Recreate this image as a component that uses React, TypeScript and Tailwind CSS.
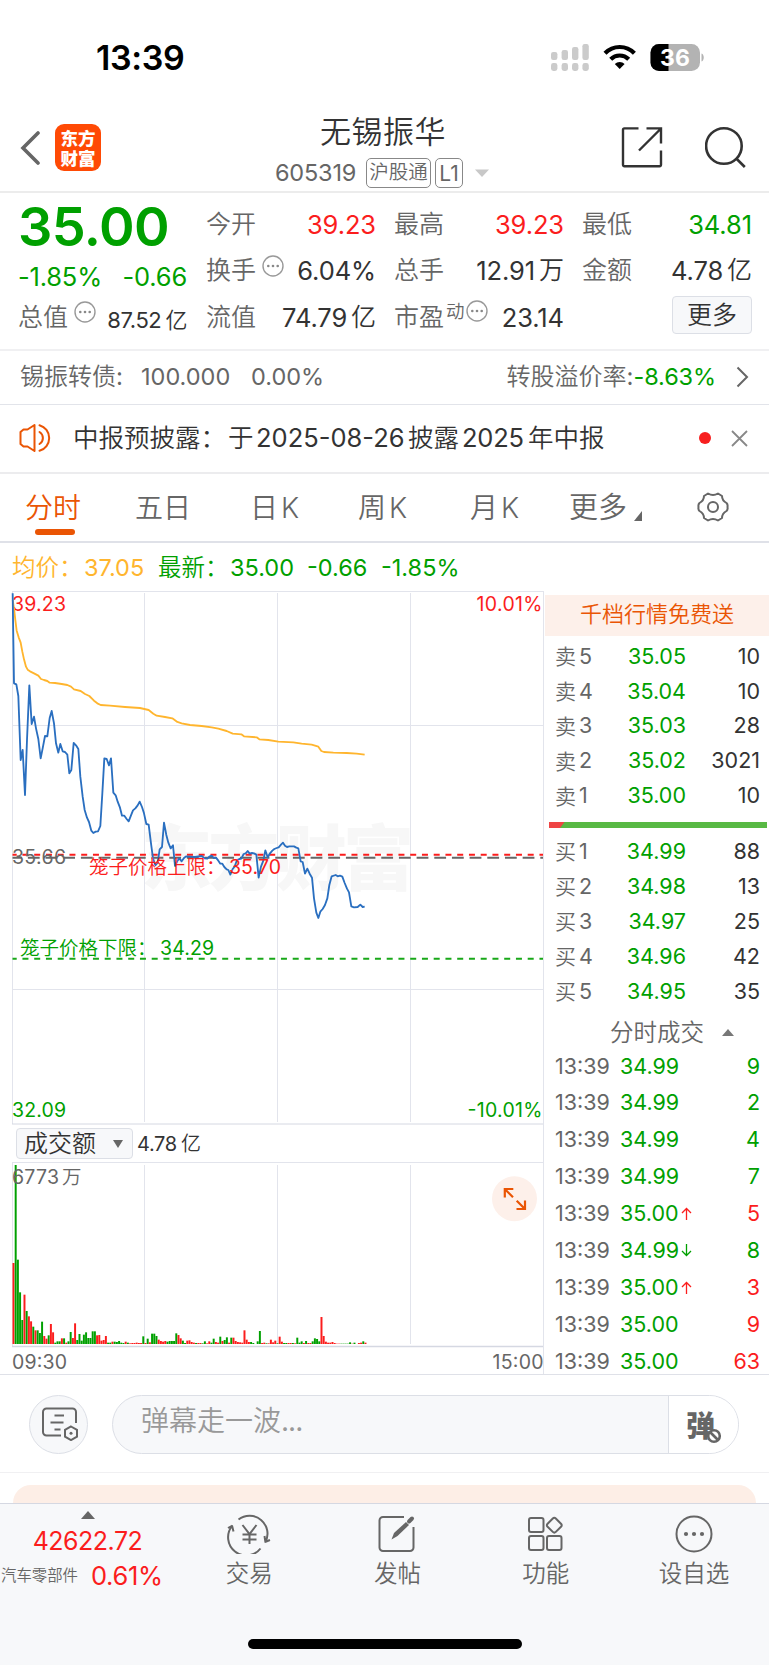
import type { ReactNode } from 'react';

const AVERAGE =
  '38,60 42,85 46,120 50,152 56,172 62,188 67,215 72,238 78,260 83,269 90,274 102,280 115,287 123,297 132,300 142,303 149,308 165,309 185,312 202,315 213,320 222,328 242,333 255,342 268,348 282,362 292,370 302,375 330,377 375,381 420,384 446,390 460,401 470,407 495,411 517,415 532,426 545,430 570,435 605,438 635,442 655,446 680,453 698,461 724,463 732,469 770,472 778,478 805,480 835,485 880,487 905,491 935,494 955,500 964,513 972,516 1000,518 1040,519 1070,521 1094,524';

const PRICE =
  '38,40 40,180 42,310 49,313 55,348 62,540 68,510 75,645 81,480 88,316 95,432 102,410 108,445 115,477 122,535 128,505 135,468 142,469 149,414 155,393 162,430 168,490 175,518 181,492 188,514 195,516 202,524 208,580 214,570 221,489 228,496 235,507 241,590 248,650 254,690 261,713 267,726 274,752 280,759 287,755 294,754 301,738 307,640 313,535 320,537 327,556 333,535 340,638 347,646 353,665 360,683 366,707 373,707 380,717 386,724 393,706 399,691 406,685 413,676 419,665 426,681 432,700 439,732 446,734 453,790 459,835 466,856 473,848 479,808 486,801 492,728 499,765 505,788 512,805 519,796 525,858 532,843 538,835 545,844 552,834 558,829 570,830 585,831 605,828 614,835 622,836 628,830 635,827 641,834 648,833 655,842 661,851 667,851 673,861 680,868 685,870 691,884 698,867 704,860 711,840 718,837 724,836 731,822 737,820 743,813 749,821 756,819 762,820 769,824 776,893 783,860 790,842 796,811 803,832 810,820 817,812 823,807 830,804 836,802 843,794 849,788 855,797 861,801 868,799 882,799 889,803 895,805 902,844 908,846 915,881 922,866 929,881 936,893 942,955 949,998 955,1014 961,995 968,987 975,975 982,955 988,915 995,889 1007,885 1013,889 1020,887 1027,890 1034,909 1041,926 1047,937 1054,979 1062,982 1073,981 1081,974 1088,981 1094,980';

const VOLUME =
  'r243 g537 g253 g155 g72 r148 g99 r83 r68 g52 r41 g41 g33 g67 r24 r16 g26 r60 r35 g4 g8 g8 r17 g17 r4 g8 g36 r18 r62 g12 g30 g10 g28 g35 g18 g18 g38 g38 r26 r27 r10 r12 r24 g4 g4 r7 g7 g6 g9 g4 g3 r7 g4 r2 r3 r3 r4 r3 r3 g23 r3 g16 r5 g31 g31 g24 r13 r9 r7 r9 g7 g9 g9 g9 g32 r27 r17 g10 g3 r10 r11 r6 r4 g3 r3 r3 g2 g8 r2 r8 g4 g16 r6 r4 g22 r9 g12 g20 r4 g19 r19 r9 r6 r5 r4 r41 r13 r6 g6 g3 r0 g8 g39 r3 r4 g2 r2 r13 r5 r10 g2 r22 r7 g3 g3 r3 r3 g3 r2 g19 g4 g8 r3 g9 r3 r3 g8 g17 g15 g8 r81 r24 r7 r4 r4 r6 r3 r1 r1 g1 g1 g1 g1 g5 r1 g4 r0 r3 r4 g8 r4'
    .split(' ')
    .map((s) => ({ up: s[0] === 'r', h: Number(s.slice(1)) }));

const SELL = [
  ['5', '35.05', '10'],
  ['4', '35.04', '10'],
  ['3', '35.03', '28'],
  ['2', '35.02', '3021'],
  ['1', '35.00', '10'],
];
const BUY = [
  ['1', '34.99', '88'],
  ['2', '34.98', '13'],
  ['3', '34.97', '25'],
  ['4', '34.96', '42'],
  ['5', '34.95', '35'],
];
const TRADES: [string, string, string, boolean][] = [
  ['34.99', '', '9', false],
  ['34.99', '', '2', false],
  ['34.99', '', '4', false],
  ['34.99', '', '7', false],
  ['35.00', 'up', '5', true],
  ['34.99', 'down', '8', false],
  ['35.00', 'up', '3', true],
  ['35.00', '', '9', true],
  ['35.00', '', '63', true],
];

function StatusBar() {
  return (
    <div className="flex h-[115px] items-center justify-between pr-[64px] pl-[96px]">
      <span className="text-[34px] font-semibold tracking-[-0.4px] text-black">13:39</span>
      <svg width="154" height="30" viewBox="0 0 154 30">
        <g fill="#cbcbcb">
          <rect x="0" y="9" width="6.4" height="8" rx="2.2" />
          <rect x="10.6" y="7" width="6.4" height="10" rx="2.2" />
          <rect x="21" y="4" width="6.4" height="13" rx="2.2" />
          <rect x="31.4" y="1" width="6.4" height="16" rx="2.2" />
          <rect x="0" y="20" width="6.4" height="8" rx="2.4" />
          <rect x="10.6" y="20" width="6.4" height="8" rx="2.4" />
          <rect x="21" y="20" width="6.4" height="8" rx="2.4" />
          <rect x="31.4" y="20" width="6.4" height="8" rx="2.4" />
        </g>
        <g fill="none" stroke="#000" strokeWidth="4.2">
          <path d="M54 10.200a20.5 20.5 0 0 1 29.4 0" />
          <path d="M59.7 16.200a12.8 12.8 0 0 1 18 0" />
        </g>
        <path d="M63.8 21a7 7 0 0 1 9.8 0l-4.900 5z" fill="#000" />
        <clipPath id="battery">
          <rect x="99.500" y="1" width="49.5" height="27" rx="8.5" />
        </clipPath>
        <g clipPath="url(#battery)">
          <rect x="99" y="1" width="51" height="27" fill="#b3b3b3" />
          <rect x="99" y="1" width="18.500" height="27" fill="#000" />
        </g>
        <path d="M150.500 10.5c3 .8 3 7.2 0 8z" fill="#b3b3b3" />
        <text x="124" y="22.600" textAnchor="middle" fontSize="23" fontWeight="700" fill="#fff">36</text>
      </svg>
    </div>
  );
}

function Header() {
  return (
    <div className="flex h-[78px] items-start border-b-2 border-[#ececec] pr-[22px] pl-[20px]">
      <div className="flex w-[255px] items-center gap-[15px] pt-[9px]">
        <svg width="20" height="34" viewBox="0 0 20 34" fill="none" stroke="#666" strokeWidth="3.6" strokeLinecap="round">
          <path d="M18 2 3 17l15 15" />
        </svg>
        <div className="grid h-[47px] w-[46px] content-center rounded-[9px] bg-[#ff4a05] text-center font-['Noto_Sans_CJK_SC',sans-serif] text-[17.5px] leading-[19.5px] font-black text-white">
          <span>东方</span>
          <span>财富</span>
        </div>
      </div>
      <div className="flex w-[216px] flex-col">
        <div className="self-center text-[31px] leading-[34px] tracking-[0.5px] text-[#333]">无锡振华</div>
        <div className="mt-[9px] flex h-[30px] items-center gap-[4px] text-[#666]">
          <span className="mr-[2px] w-[85px] text-[23.5px] tracking-[-0.200px]">605319</span>
          <span className="flex h-[30px] w-[65px] items-center justify-center rounded-[5px] border border-[#888] text-[19.5px] leading-none">沪股通</span>
          <span className="flex h-[30px] w-[28px] items-center justify-center rounded-[5px] border border-[#888] text-[21px] leading-none">L1</span>
          <svg className="ml-[8px] shrink-0" width="14" height="8" viewBox="0 0 14 8">
            <path d="M0 .5h14L7 8z" fill="#c8c8c8" />
          </svg>
        </div>
      </div>
      <div className="ml-auto flex gap-[42px] pt-[11px]">
        <svg width="42" height="42" viewBox="0 0 42 42" fill="none" stroke="#333" strokeWidth="2.4">
          <path d="M17.5 2.4H3.4a1.4 1.4 0 0 0-1.4 1.4v35a1.4 1.4 0 0 0 1.4 1.4h35.200a1.4 1.4 0 0 0 1.400-1.400V24.500M25.500 2.400H40V17.500M39.500 3 18 24.500" />
        </svg>
        <svg width="42" height="42" viewBox="0 0 42 42" fill="none" stroke="#333" strokeWidth="2.6">
          <circle cx="18.900" cy="20" r="17.800" />
          <path d="m30.800 32 9 9" />
        </svg>
      </div>
    </div>
  );
}

function Dots() {
  return (
    <svg className="shrink-0" width="22" height="22" viewBox="0 0 22 22">
      <circle cx="11" cy="11" r="10" fill="none" stroke="#999" strokeWidth="1.400" />
      <g fill="#888">
        <circle cx="6.300" cy="11" r="1.300" />
        <circle cx="11" cy="11" r="1.300" />
        <circle cx="15.700" cy="11" r="1.300" />
      </g>
    </svg>
  );
}

function Label({ children }: { children: ReactNode }) {
  return <span className="text-[25px] leading-none text-[#666]">{children}</span>;
}

function Stat({ label, extra, value, unit, tone }: { label: string; extra?: ReactNode; value: string; unit?: string; tone: string }) {
  return (
    <div className="flex h-[46.500px] items-center">
      <Label>{label}</Label>
      {extra}
      <span className={`ml-auto flex items-center gap-[4px] text-[25.500px] leading-none tracking-[-0.100px] ${tone}`}>
        {value}
        {unit && <span className="text-[25px]">{unit}</span>}
      </span>
    </div>
  );
}

function Quote() {
  const dark = 'text-[#333]';
  return (
    <div className="grid h-[158px] grid-cols-[170px_170px_170px_170px] gap-x-[18px] border-b-2 border-[#f0f0f2] pt-[8px] pl-[18px]">
      <div className="flex flex-col pr-[1px] leading-none text-[#00a000]">
        <div className="mt-[-3px] text-[54px] leading-[57px] font-semibold tracking-[-0.600px]">35.00</div>
        <div className="mt-[8px] flex justify-between text-[25.500px] leading-[28px] tracking-[-0.200px]">
          <span>-1.85%</span>
          <span>-0.66</span>
        </div>
        <div className="mt-[3px] flex h-[46.500px] items-center">
          <Label>总值</Label>
          <span className="mb-[11px] ml-[6px]"><Dots /></span>
          <span className="mt-[5px] ml-auto flex items-center gap-[4px] text-[22px] leading-none tracking-[-0.400px] text-[#333]">
            87.52<span>亿</span>
          </span>
        </div>
      </div>
      <div>
        <Stat label="今开" value="39.23" tone="text-[#fb1d1d]" />
        <Stat label="换手" extra={<span className="mb-[10px] ml-[6px]"><Dots /></span>} value="6.04%" tone={dark} />
        <Stat label="流值" value="74.79" unit="亿" tone={dark} />
      </div>
      <div>
        <Stat label="最高" value="39.23" tone="text-[#fb1d1d]" />
        <Stat label="总手" value="12.91" unit="万" tone={dark} />
        <Stat
          label="市盈"
          extra={
            <span className="mb-[13px] ml-[2px] flex items-center gap-[1px] text-[18.500px] leading-none text-[#666]">
              动<Dots />
            </span>
          }
          value="23.14"
          tone={dark}
        />
      </div>
      <div>
        <Stat label="最低" value="34.81" tone="text-[#00a000]" />
        <Stat label="金额" value="4.78" unit="亿" tone={dark} />
        <div className="mt-[2px] ml-auto flex h-[38px] w-[80px] items-center justify-center rounded-[4px] border border-[#dcdfe6] bg-[#f7f8fa] text-[25px] leading-none text-[#333]">更多</div>
      </div>
    </div>
  );
}

function BondRow() {
  return (
    <div className="flex h-[54px] items-center border-b border-[#e2e4ea] pr-[20px] pb-[1px] pl-[20px] text-[23.500px] leading-none text-[#666]">
      <span className="w-[121px] text-[24px]">锡振转债:</span>
      <span className="w-[110px]">100.000</span>
      <span>0.00%</span>
      <span className="ml-auto text-[24px]">转股溢价率:</span>
      <span className="tracking-[-0.100px] text-[#00a000]">-8.63%</span>
      <svg className="ml-[20px]" width="13" height="22" viewBox="0 0 13 22" fill="none" stroke="#666" strokeWidth="2">
        <path d="m1.500 1.500 9.500 9.500-9.500 9.500" />
      </svg>
    </div>
  );
}

function Notice() {
  return (
    <div className="flex h-[69px] items-center border-b-2 border-[#ececee] pr-[21px] pb-[1px] pl-[19px] leading-none">
      <svg width="34" height="30" viewBox="0 0 34 30" fill="none" stroke="#ea5504" strokeWidth="2" strokeLinejoin="round" strokeLinecap="round">
        <path d="M15.500 2 8.500 6.500H4.500L1.500 9v12l3 2.500h4l7 4.500z" />
        <path d="M20.500 9a7 7 0 0 1 0 12M20.500 2.200a13.300 13.300 0 0 1 0 25.600" />
      </svg>
      <span className="ml-[20px] flex items-center text-[25.500px] text-[#333]">
        <span className="w-[155px]">中报预披露：</span>
        <span className="w-[28px]">于</span>
        <span className="w-[152px]">2025-08-26</span>
        <span className="w-[54px]">披露</span>
        <span className="w-[66px] tracking-[-0.200px]">2025</span>
        <span>年中报</span>
      </span>
      <span className="ml-auto h-[12px] w-[12px] rounded-full bg-[#f71f1f]" />
      <svg className="ml-[20px]" width="17" height="17" viewBox="0 0 17 17" stroke="#888" strokeWidth="1.800">
        <path d="m1 1 15 15M16 1 1 16" />
      </svg>
    </div>
  );
}

function Tabs() {
  return (
    <div className="flex h-[69px] items-start border-b-2 border-[#dfe1e8] pt-[19px] pl-[25px] text-[28px] leading-[30px] text-[#666]">
      <div className="flex w-[110px] flex-col">
        <span className="text-[#ea5504]">分时</span>
        <span className="mt-[6px] ml-[10px] h-[6px] w-[40px] rounded-full bg-[#ea5504]" />
      </div>
      <span className="w-[115px]">五日</span>
      <span className="flex w-[108px] gap-[3px]">日<span className="font-[350]">K</span></span>
      <span className="flex w-[112px] gap-[3px]">周<span className="font-[350]">K</span></span>
      <span className="flex w-[99px] gap-[3px]">月<span className="font-[350]">K</span></span>
      <span className="w-[64px] text-[29px]">更多</span>
      <svg className="mt-[18px]" width="10" height="10"><path d="M9 0v10H1z" fill="#666" /></svg>
      <svg className="mt-[-2px] ml-[53px]" width="34" height="32" viewBox="0 0 34 32" fill="none" stroke="#666" strokeWidth="2" strokeLinejoin="round">
        <path d="M12 2.500Q17 5.500 22 2.500L26 5Q26 9.500 30.500 12Q32 13.500 31.500 16Q32 18.500 30.500 20Q26 22.500 26 27L22 29.500Q17 26.500 12 29.500L8 27Q8 22.500 3.500 20Q2 18.500 2.500 16Q2 13.500 3.500 12Q8 9.500 8 5Z" />
        <circle cx="17" cy="16" r="5" />
      </svg>
    </div>
  );
}

function Summary() {
  return (
    <div className="flex h-[48px] items-center pt-[1px] pl-[12px] text-[23.500px] leading-none text-[#00a000]">
      <span className="w-[72px] text-[#ffb52e]">均价：</span>
      <span className="w-[74px] text-[#ffb52e]">37.05</span>
      <span className="w-[72px]">最新：</span>
      <span className="w-[77px]">35.00</span>
      <span className="w-[74px]">-0.66</span>
      <span>-1.85%</span>
    </div>
  );
}

function PriceChart() {
  return (
    <svg className="block" width="543" height="534" viewBox="0 591 543 534">
      <text x="141" y="884" className="font-['Noto_Sans_CJK_SC',sans-serif]" fontSize="71" fontWeight="900" fill="#f7f7f7" textLength="273">东方财富</text>
      <g stroke="#e2e4ec" strokeWidth="1">
        <path d="M12.500 591v533M144.500 593v529M277.500 593v529M410.500 593v529M12 591.500h532M12 725.500h532M12 989.500h532" />
        <path d="M12 1124h532" stroke="#d5d8e2" />
      </g>
      <path d="M12.500 857.700H543" stroke="#666" strokeWidth="2" strokeDasharray="11.800 5.870" strokeDashoffset="2.300" />
      <path d="M12.500 854.700H543" stroke="#fb1d1d" strokeWidth="2" strokeDasharray="6 5.750" strokeDashoffset="1.800" />
      <path d="M12.500 958.800H543" stroke="#18a818" strokeWidth="2" strokeDasharray="6 5.750" strokeDashoffset="1.800" />
      <g fontSize="19.500">
        <text x="12" y="611" fill="#fb1d1d" textLength="54">39.23</text>
        <text x="12" y="863.500" fill="#666" textLength="54">35.66</text>
        <text x="12" y="1117" fill="#00a000" textLength="54">32.09</text>
        <text x="542.500" y="611" textAnchor="end" fill="#fb1d1d" textLength="66">10.01%</text>
        <text x="542.500" y="1117" textAnchor="end" fill="#00a000" textLength="75">-10.01%</text>
      </g>
      <g transform="translate(0 580) scale(.33333)" fill="none" strokeLinejoin="round" strokeWidth="5.500">
        <polyline points={AVERAGE} stroke="#ffb52e" />
        <polyline points={PRICE} stroke="#2a6fc0" />
      </g>
      <g fontSize="19.500">
        <text x="89" y="874" fill="#fb1d1d">笼子价格上限：</text>
        <text x="229" y="874" fill="#fb1d1d" textLength="52">35.70</text>
        <text x="20" y="955" fill="#00a000">笼子价格下限：</text>
        <text x="160" y="955" fill="#00a000" textLength="54">34.29</text>
      </g>
    </svg>
  );
}

function TurnoverRow() {
  return (
    <div className="flex h-[37px] items-center gap-[4px] pl-[16px] leading-none">
      <div className="flex h-[31px] w-[117px] items-center justify-between rounded-[4px] border border-[#dcdfe6] bg-[#f7f8fa] pr-[9px] pl-[7px] text-[24px] text-[#333]">
        成交额
        <svg width="10" height="8"><path d="M0 0h10L5 8z" fill="#666" /></svg>
      </div>
      <span className="flex items-center gap-[4px] text-[20px] tracking-[-0.300px] text-[#333]">
        4.78<span>亿</span>
      </span>
    </div>
  );
}

function VolumeChart() {
  return (
    <svg className="block" width="543" height="213" viewBox="0 1162 543 213">
      <g stroke="#e2e4ec">
        <path d="M12.500 1162v184M12 1162.500h532M144.500 1165v179M277.500 1165v179M410.500 1165v179" />
        <path d="M12 1346.500h532" stroke="#d5d8e2" strokeWidth="1.500" />
      </g>
      <g transform="translate(0 960) scale(.33333)">
        {VOLUME.map((v, i) => (
          <rect key={i} x={37.500 + i * 6.600} y={1152 - v.h} width="5.900" height={v.h} fill={v.up ? '#fb1d1d' : '#00a000'} />
        ))}
      </g>
      <g fontSize="19.500" fill="#666">
        <text x="12" y="1184" textLength="47">6773</text>
        <text x="62" y="1184">万</text>
        <text x="12" y="1369" textLength="55">09:30</text>
        <text x="543.500" y="1369" textAnchor="end" textLength="51">15:00</text>
      </g>
      <circle cx="514.500" cy="1198.700" r="22.500" fill="#fdf0ea" />
      <g fill="none" stroke="#ea5504" strokeWidth="2.200">
        <path d="M504.800 1197.500v-8.500h8.500M505 1189.200l8 8M516.500 1209h8.500v-8.500M524.700 1208.700l-8-8" />
      </g>
    </svg>
  );
}

function BookRow({ side, row }: { side: string; row: string[] }) {
  return (
    <div className="flex h-[34.900px] items-center pr-[9px] pl-[11px] text-[21.500px] leading-none">
      <span className="w-[24px] text-[21px] text-[#666]">{side}</span>
      <span className="w-[36px] text-[#666]">{row[0]}</span>
      <span className="w-[71px] text-right text-[#00a000]">{row[1]}</span>
      <span className="ml-auto text-[#333]">{row[2]}</span>
    </div>
  );
}

function OrderBook() {
  return (
    <div className="flex w-[226px] flex-col border-l border-[#e2e4ec]">
      <div className="mt-[4px] ml-[1px] flex h-[41px] shrink-0 items-center justify-center bg-[#fdf0ea] pb-[3px] text-[22px] leading-none text-[#ea5504]">千档行情免费送</div>
      <div className="mt-[3px] shrink-0">{SELL.map((r) => <BookRow key={r[0]} side="卖" row={r} />)}</div>
      <svg className="mt-[9px] ml-[5px] shrink-0" width="218" height="6">
        <rect width="218" height="6" fill="#58b944" />
        <path d="M0 0h15.500L11 6H0z" fill="#ef4444" />
      </svg>
      <div className="mt-[6px] shrink-0">{BUY.map((r) => <BookRow key={r[0]} side="买" row={r} />)}</div>
      <div className="mt-[9px] flex h-[29px] shrink-0 items-center justify-center gap-[18px] pl-[31px] text-[23.500px] leading-none text-[#666]">
        分时成交
        <svg width="12" height="7"><path d="M0 7h12L6 0z" fill="#777" /></svg>
      </div>
      <div className="mt-[1px] shrink-0">
        {TRADES.map(([price, dir, lots, buy], i) => (
          <div key={i} className="flex h-[36.900px] items-center pr-[9px] pl-[11px] text-[21.500px] leading-none">
            <span className="w-[65px] text-[#666]">13:39</span>
            <span className="w-[59px] text-[#00a000]">{price}</span>
            {dir && (
              <svg className="ml-[2px]" width="11" height="13" viewBox="0 0 11 13" fill="none" stroke={dir === 'up' ? '#fb1d1d' : '#00a000'} strokeWidth="1.300">
                {dir === 'up' ? <path d="M5.500 13V1.500M1 6l4.500-4.500L10 6" /> : <path d="M5.500 0v11.500M1 7l4.500 4.500L10 7" />}
              </svg>
            )}
            <span className={buy ? 'ml-auto text-[#fb1d1d]' : 'ml-auto text-[#00a000]'}>{lots}</span>
          </div>
        ))}
      </div>
    </div>
  );
}

function Barrage() {
  return (
    <div className="flex h-[98px] items-center border-b border-[#f0f0f2] pt-[1px] pr-[30px] pl-[29px]">
      <div className="flex h-[59px] w-[59px] items-center justify-center rounded-full border border-[#dcdfe6] bg-[#f7f8fa] pl-[2px]">
        <svg width="36" height="34" viewBox="0 0 36 34" fill="none" stroke="#666" strokeWidth="2">
          <path d="M19 28.500H4.500A3.500 3.500 0 0 1 1 25V5a3.500 3.500 0 0 1 3.500-3.500h26A3.500 3.500 0 0 1 34 5v11M12.500 8.500h9.500M8.500 15.500h13M12.500 22.500h6" />
          <path d="m29 19.500 6 3.400v6.800l-6 3.400-6-3.400v-6.800z" />
          <circle cx="29" cy="26.300" r="1.500" fill="#666" stroke="none" />
        </svg>
      </div>
      <div className="ml-[24px] flex h-[59px] flex-1 overflow-hidden rounded-full border border-[#dcdfe6] bg-[#f7f8fa]">
        <div className="flex flex-1 items-center pb-[6px] pl-[28px] text-[28px] leading-none text-[#999]">
          弹幕走一波<span className="tracking-[-1px]">...</span>
        </div>
        <div className="flex w-[70px] items-center border-l border-[#dcdfe6] bg-white pl-[17px]">
          <span className="font-['Noto_Sans_CJK_SC',sans-serif] text-[29px] leading-none font-black text-[#666]">弹</span>
          <svg className="mt-[23px] ml-[-9px]" width="16" height="16" viewBox="0 0 16 16" fill="#fff" stroke="#666" strokeWidth="2.600">
            <circle cx="8" cy="8" r="5.800" />
            <path d="m4.500 4.500 7 7" />
          </svg>
        </div>
      </div>
    </div>
  );
}

function NavItem({ label, children }: { label: string; children: ReactNode }) {
  return (
    <div className="flex w-[148.300px] flex-col items-center pt-[10px]">
      <svg width="44" height="40" viewBox="0 0 44 40" fill="none" stroke="#666" strokeWidth="2">{children}</svg>
      <span className="mt-[8px] text-[23.500px] leading-[24px] text-[#666]">{label}</span>
    </div>
  );
}

function BottomNav() {
  return (
    <div className="flex h-[162px] flex-col border-t border-[#d5d8e2] bg-[#f7f8fa]">
      <div className="flex h-[135px]">
        <div className="flex w-[175px] flex-col items-center leading-none text-[#fb1d1d]">
          <svg className="mt-[7px] mr-[-1px]" width="14" height="8"><path d="M0 8h14L7 0z" fill="#666" /></svg>
          <span className="mt-[10px] text-[25px] tracking-[-0.500px]">42622.72</span>
          <span className="mt-[9px] flex items-center self-start pl-[1px]">
            <span className="text-[15.400px] text-[#666]">汽车零部件</span>
            <span className="ml-[13px] text-[25.500px] tracking-[-0.300px]">0.61%</span>
          </span>
        </div>
        <NavItem label="交易">
          <path d="M11.500 5.500A18 18 0 0 1 38.500 28M38 28l5-2M38.500 28.500 37.500 22M33.500 34.500A18 18 0 0 1 5 12M5.500 11.500 1 14M5 11.500l1.500 6" />
          <path d="m15.500 11 7 9 7-9M22.500 20v10M15.500 20.500h14M15.500 25.500h14" />
        </NavItem>
        <NavItem label="发帖">
          <path d="M29 3H8a3.500 3.500 0 0 0-3.500 3.500v27A3.500 3.500 0 0 0 8 37h27a3.500 3.500 0 0 0 3.500-3.500V13" />
          <path d="M16.500 25.500 19 19 31 8l3 3-11.500 11z" fill="#666" stroke="none" />
          <path d="m34 7.500 3-3" strokeWidth="4" strokeLinecap="round" />
        </NavItem>
        <NavItem label="功能">
          <rect x="5" y="4" width="14.500" height="14" rx="2" />
          <rect x="5" y="22" width="14.500" height="14" rx="2" />
          <rect x="23" y="22" width="14.500" height="14" rx="2" />
          <path d="M28.800 4.500q1.500-1.500 3 0l5.200 5.200q1.500 1.500 0 3l-5.200 5.200q-1.500 1.500-3 0l-5.200-5.200q-1.500-1.500 0-3z" />
        </NavItem>
        <NavItem label="设自选">
          <circle cx="22" cy="20" r="17.500" />
          <g fill="#666" stroke="none">
            <circle cx="14" cy="20" r="2.100" />
            <circle cx="22" cy="20" r="2.100" />
            <circle cx="30" cy="20" r="2.100" />
          </g>
        </NavItem>
      </div>
      <div className="h-[10px] w-[274px] self-center rounded-full bg-black" />
    </div>
  );
}

export default function App() {
  return (
    <div className="h-[1665px] w-[769px] overflow-hidden bg-white font-[Inter,'Noto_Sans_CJK_SC_DemiLight','Noto_Sans_CJK_SC',sans-serif]">
      <StatusBar />
      <Header />
      <Quote />
      <BondRow />
      <Notice />
      <Tabs />
      <Summary />
      <div className="flex h-[784px] overflow-hidden border-b border-[#dfe1e8]">
        <div className="w-[543px] shrink-0">
          <PriceChart />
          <TurnoverRow />
          <VolumeChart />
        </div>
        <OrderBook />
      </div>
      <Barrage />
      <div className="flex h-[30px] items-end overflow-hidden px-[13px]">
        <div className="h-[18px] flex-1 rounded-t-[26px] bg-[#fdeee6]" />
      </div>
      <BottomNav />
    </div>
  );
}
